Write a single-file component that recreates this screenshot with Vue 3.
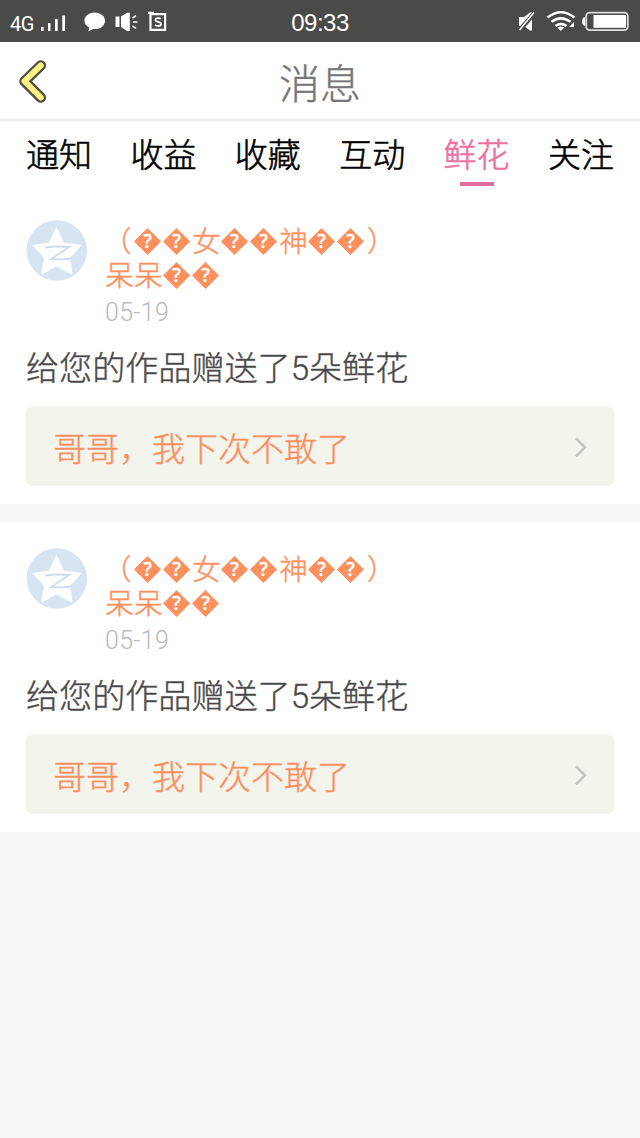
<script setup>
const tabs = ['通知', '收益', '收藏', '互动', '鲜花', '关注']
const active = '鲜花'
const messages = [1, 2].map((id) => ({
  id,
  name: ['（��女��神��）', '呆呆��'].map((line) => [...line]),
  date: '05-19',
  text: '给您的作品赠送了5朵鲜花',
  work: '哥哥，我下次不敢了',
}))
const kind = (c) => ({ unknown: c === '�', open: c === '（', close: c === '）' })
</script>

<template>
  <div class="screen">
    <div class="status">
      <span class="net">4G</span>
      <svg class="left-icons" width="130" height="24" viewBox="40 10 130 24" fill="#fff">
        <path d="M41 27h2.600v4h-2.600zM48 23h2.500v8H48zM55 19h2.700v12H55zM62.300 15.500h2.700V31h-2.700z" />
        <path d="M94.700 12.500c5.900 0 10.300 3.600 10.300 8.300s-4.400 8.300-9.700 8.300l-2.300-.1-4.600 2.500 1-3.900c-3.100-1.500-5-4-5-6.800 0-4.700 4.400-8.300 10.300-8.300z" />
        <path d="M115.500 16.500h4v10.500h-4zM121 16.500l6-3.800h2.800v18.200H127l-6-3.900z" />
        <path d="M132.500 18l3.500-2.300M133 22h4.500M132.500 26l3.500 2.300" stroke="#fff" stroke-width="1.500" fill="none" />
        <path d="M150.500 14.200h14.600v15.600h-14.600zM148 12.800h6" stroke="#fff" stroke-width="2.200" fill="none" />
        <path d="M161 18.800c-1-.8-5.500-1.400-5.500 1.200 0 2.600 5.500 1.300 5.500 3.900 0 2.700-4.500 2.300-6 .9" stroke="#fff" stroke-width="1.800" fill="none" />
      </svg>
      <span class="clock">09:33</span>
      <svg class="right-icons" width="114" height="24" viewBox="517 10 114 24" fill="#fff">
        <path d="M520 17h5l6-4.500h2v18h-2l-6-4.500h-5z" />
        <path d="M519.500 31.500l16.500-19" stroke="#4a4a48" stroke-width="4.500" />
        <path d="M520.500 30l14.500-17.500" stroke="#fff" stroke-width="1.500" />
        <g fill="none" stroke="#fff" stroke-width="2.600">
          <path d="M548.500 17.500q13.500-10.500 27 0M552.500 21.800q9.500-7 19 0M556.500 26q5.500-4 11 0" />
        </g>
        <path d="M558.500 27.800q3.300-2.500 6.600 0L561.800 31zM575 22v5h-5z" />
        <rect x="587.200" y="12.700" width="41.600" height="17.400" rx="3.500" fill="none" stroke="#ddd" stroke-width="1.800" />
        <rect x="594.500" y="15" width="32.500" height="12.800" />
        <path d="M586 17.200h-1q-2 1-2 4.300t2 4.300h1z" />
      </svg>
    </div>

    <header class="header">
      <svg class="back" width="32" height="46" viewBox="16 58 32 46" fill="none" stroke-linecap="round" stroke-linejoin="round">
        <path d="M40.800 65.500L24.500 81.200L40.800 97.500" stroke="#504e40" stroke-width="10.600" />
        <path d="M40.800 65.500L24.500 81.200L40.800 97.500" stroke="#fbf184" stroke-width="6" />
      </svg>
      <h1>消息</h1>
    </header>

    <nav class="tabs">
      <div v-for="t in tabs" :key="t" class="tab" :class="{ active: t === active }">{{ t }}</div>
    </nav>

    <main class="list">
      <article v-for="m in messages" :key="m.id" class="card">
        <div class="user">
          <svg class="avatar" width="61" height="61" viewBox="0 0 61 61">
            <circle cx="30.800" cy="30.500" r="30.200" fill="#d7e4f1" />
            <path d="M30.500 8.300L37.800 23.500L54.500 25.500L43.300 37.500L45.800 53.500L30.500 45.500L16 53.500L18.700 37.500L7.500 25.500L23.500 23.500Z" fill="#fff" stroke="#fff" stroke-width="1.500" stroke-linejoin="round" />
            <path d="M19.500 27.500Q31 25.800 43 27L25.500 39Q34 40 45 38.500" fill="none" stroke="#cddced" stroke-width="1.800" />
          </svg>
          <div class="meta">
            <div v-for="(line, i) in m.name" :key="i" class="name">
              <span v-for="(c, j) in line" :key="j" :class="kind(c)">{{ c }}</span>
            </div>
            <time>{{ m.date }}</time>
          </div>
        </div>
        <p class="text">{{ m.text }}</p>
        <div class="work">
          <span>{{ m.work }}</span>
          <svg width="14" height="22" viewBox="0 0 14 22" fill="none" stroke="#c3c4be" stroke-width="2.600">
            <path d="M2 2.300L10.800 11.300L2 20.300" />
          </svg>
        </div>
      </article>
    </main>
  </div>
</template>

<style>
body {
  background: #f7f7f7;
}
</style>

<style scoped>
.screen {
  width: 640px;
  height: 1138px;
  overflow: hidden;
  background: #f7f7f7;
  font-family: Roboto, "Noto Sans CJK SC", sans-serif;
  font-weight: 300;
  -webkit-text-stroke-width: 0.4px;
}
.status {
  box-sizing: border-box;
  height: 42px;
  padding: 0 10px;
  display: grid;
  grid-template-columns: 30px 1fr auto 1fr;
  align-items: center;
  background: #4a4a48;
  color: #fff;
  -webkit-text-stroke-width: 0;
}
.net {
  font-size: 20px;
  line-height: 24px;
  padding-top: 5px;
  font-weight: 400;
  letter-spacing: -0.5px;
}
.clock {
  font: 400 24px/30px "Liberation Sans", sans-serif;
  letter-spacing: -0.5px;
  padding-top: 3px;
  margin-left: -30px;
}
.left-icons {
  margin-top: 2px;
}
.right-icons {
  justify-self: end;
  margin-top: 2px;
}
.header {
  box-sizing: border-box;
  height: 79px;
  padding: 0 16px;
  display: grid;
  grid-template-columns: 32px 1fr 32px;
  align-items: center;
  background: #fff;
  border-bottom: 2px solid #ececec;
}
h1 {
  margin: 0;
  padding-top: 8px;
  text-align: center;
  font-size: 41px;
  line-height: 60px;
  font-weight: 300;
  color: #777;
}
.tabs {
  box-sizing: border-box;
  height: 73px;
  padding: 10px 26px 0;
  display: flex;
  justify-content: space-between;
  background: #fff;
}
.tab {
  display: flex;
  flex-direction: column;
  align-items: center;
  font-size: 33px;
  line-height: 50px;
  color: #000;
  -webkit-text-stroke-width: 0.6px;
}
.active {
  color: #ee6fa0;
}
.active::after {
  content: "";
  width: 34px;
  height: 4px;
  margin-top: 1px;
  background: #de6f9c;
}
.list {
  display: flex;
  flex-direction: column;
  gap: 18px;
}
.card {
  box-sizing: border-box;
  height: 310px;
  padding: 26px 26px 0;
  background: #fff;
}
.user {
  display: flex;
  gap: 18px;
  height: 119px;
}
.meta {
  padding-top: 6px;
}
.name {
  display: flex;
  height: 34px;
  font-size: 28.500px;
  line-height: 34px;
  color: #ff8f5c;
}
.name span {
  width: 29px;
  text-align: center;
}
.name .open {
  text-indent: -5px;
}
.name .close {
  text-indent: 1px;
}
.name .unknown {
  position: relative;
  font-family: "DejaVu Sans", sans-serif;
  font-size: 26px;
  color: transparent;
}
.name .unknown::before {
  content: "?";
  position: absolute;
  left: 0;
  top: 2px;
  width: 27px;
  height: 27px;
  clip-path: polygon(50% 0, 100% 50%, 50% 100%, 0 50%);
  background: #ff8f5c;
  color: #fff;
  font: 600 19px/27px "Open Sans", sans-serif;
}
time {
  display: block;
  font-size: 25px;
  line-height: 30px;
  padding-top: 4px;
  letter-spacing: 0.3px;
  color: #bababa;
  -webkit-text-stroke-width: 0;
}
.text {
  margin: 0;
  padding-top: 3px;
  height: 64px;
  font-size: 33.100px;
  line-height: 54px;
  color: #4a4a4a;
}
.work {
  box-sizing: border-box;
  height: 80px;
  padding: 2px 26px 0 27px;
  display: flex;
  align-items: center;
  justify-content: space-between;
  border-radius: 6px;
  background: #f3f4ec;
  color: #fb8e5f;
  font-size: 33px;
}
</style>
